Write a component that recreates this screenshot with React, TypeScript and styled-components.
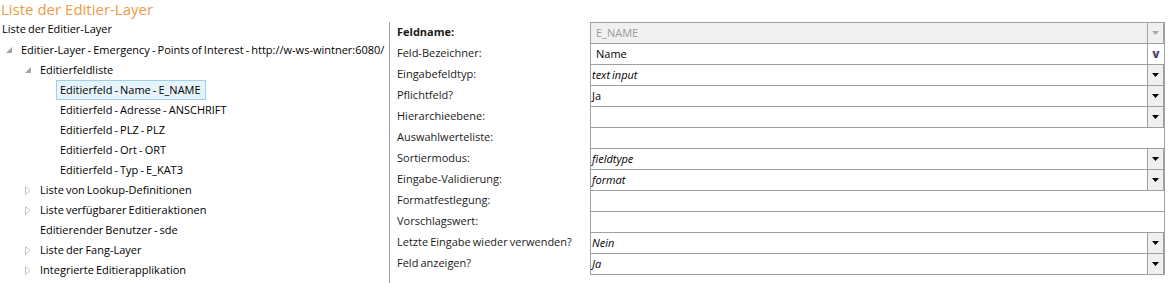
import styled, { createGlobalStyle } from "styled-components";

const GlobalStyle = createGlobalStyle`
  html, body {
    margin: 0;
    padding: 0;
    background: #fff;
  }
  body {
    font-family: "Open Sans", Lato, sans-serif;
    font-size: 11px;
    word-spacing: -0.8px;
    color: #000;
  }
`;

type Expand = "open" | "closed" | "none";

interface TreeItem {
  level: number;
  text: string;
  expand: Expand;
  selected?: boolean;
}

const treeItems: TreeItem[] = [
  { level: 0, text: "Liste der Editier-Layer", expand: "none" },
  {
    level: 1,
    text: "Editier-Layer - Emergency - Points of Interest - http://w-ws-wintner:6080/",
    expand: "open",
  },
  { level: 2, text: "Editierfeldliste", expand: "open" },
  { level: 3, text: "Editierfeld - Name - E_NAME", expand: "none", selected: true },
  { level: 3, text: "Editierfeld - Adresse - ANSCHRIFT", expand: "none" },
  { level: 3, text: "Editierfeld - PLZ - PLZ", expand: "none" },
  { level: 3, text: "Editierfeld - Ort - ORT", expand: "none" },
  { level: 3, text: "Editierfeld - Typ - E_KAT3", expand: "none" },
  { level: 2, text: "Liste von Lookup-Definitionen", expand: "closed" },
  { level: 2, text: "Liste verfügbarer Editieraktionen", expand: "closed" },
  { level: 2, text: "Editierender Benutzer - sde", expand: "none" },
  { level: 2, text: "Liste der Fang-Layer", expand: "closed" },
  { level: 2, text: "Integrierte Editierapplikation", expand: "closed" },
];

type FieldKind = "disabled" | "text" | "combo";

interface FieldDef {
  label: string;
  value: string;
  kind: FieldKind;
  bold?: boolean;
  italic?: boolean;
  dropdown?: boolean;
  spell?: boolean;
}

const fields: FieldDef[] = [
  { label: "Feldname:", value: "E_NAME", kind: "disabled", bold: true, dropdown: true },
  { label: "Feld-Bezeichner:", value: "Name", kind: "text", spell: true },
  { label: "Eingabefeldtyp:", value: "text input", kind: "combo", italic: true, dropdown: true },
  { label: "Pflichtfeld?", value: "Ja", kind: "combo", dropdown: true },
  { label: "Hierarchieebene:", value: "", kind: "combo", dropdown: true },
  { label: "Auswahlwerteliste:", value: "", kind: "combo" },
  { label: "Sortiermodus:", value: "fieldtype", kind: "combo", italic: true, dropdown: true },
  { label: "Eingabe-Validierung:", value: "format", kind: "combo", italic: true, dropdown: true },
  { label: "Formatfestlegung:", value: "", kind: "combo" },
  { label: "Vorschlagswert:", value: "", kind: "combo" },
  { label: "Letzte Eingabe wieder verwenden?", value: "Nein", kind: "combo", italic: true, dropdown: true },
  { label: "Feld anzeigen?", value: "Ja", kind: "combo", italic: true, dropdown: true },
];

const Page = styled.div`
  height: 283px;
  display: flex;
  flex-direction: column;
  overflow: hidden;
`;

const Title = styled.div`
  height: 20px;
  line-height: 18px;
  padding-left: 1px;
  font-size: 15px;
  word-spacing: 0;
  color: #ef9b48;
  white-space: nowrap;
`;

const Main = styled.div`
  flex: 1;
  display: flex;
  min-height: 0;
`;

const TreePanel = styled.div`
  width: 389px;
  flex-shrink: 0;
  display: flex;
  flex-direction: column;
  overflow: hidden;
`;

const TreeRow = styled.div<{ $level: number }>`
  height: 20px;
  display: flex;
  align-items: center;
  white-space: nowrap;
  padding-left: ${(p) => (p.$level === 0 ? 0 : (p.$level - 1) * 20 - 1)}px;
`;

const Expander = styled.span`
  width: 17px;
  height: 20px;
  flex-shrink: 0;
  display: flex;
  align-items: center;
  justify-content: center;
`;

const TreeLabel = styled.span<{ $selected?: boolean; $root?: boolean }>`
  box-sizing: border-box;
  height: 20px;
  line-height: 18px;
  padding: 0 ${(p) => (p.$root ? 0 : 4)}px 0 ${(p) => (p.$root ? 2 : 3)}px;
  border: 1px solid ${(p) => (p.$selected ? "#99d1ef" : "transparent")};
  background: ${(p) => (p.$selected ? "#e5f3fb" : "transparent")};
  ${(p) => (p.$root ? "border: none;" : "")}
`;

const DetailPanel = styled.div`
  flex: 1;
  margin-top: 2px;
  border-left: 1px solid #a0a0a0;
  padding: 0 3px 0 7px;
  min-width: 0;
`;

const Form = styled.div`
  display: grid;
  grid-template-columns: 193px 1fr;
  grid-auto-rows: 21px;
`;

const FieldLabel = styled.div<{ $bold?: boolean }>`
  line-height: 20px;
  white-space: nowrap;
  overflow: hidden;
  font-weight: ${(p) => (p.$bold ? 700 : 400)};
  color: #1a1a1a;
`;

const FieldBox = styled.div<{ $disabled?: boolean }>`
  box-sizing: border-box;
  height: 22px;
  border: 1px solid #a0a0a0;
  background: ${(p) => (p.$disabled ? "#f0f0f0" : "#fff")};
  display: flex;
  align-items: stretch;
`;

const FieldValue = styled.div<{ $kind: FieldKind; $italic?: boolean; $split?: boolean }>`
  flex: 1;
  line-height: 19px;
  padding-left: ${(p) => (p.$kind === "combo" ? 1 : 5)}px;
  font-style: ${(p) => (p.$italic ? "italic" : "normal")};
  color: ${(p) => (p.$kind === "disabled" ? "#9c9c9c" : "#000")};
  border-right: ${(p) => (p.$split ? "1px solid #a0a0a0" : "none")};
  white-space: nowrap;
  overflow: hidden;
`;

const DropButton = styled.div`
  width: 15px;
  flex-shrink: 0;
  background: #f0f0f0;
  border-left: 1px solid #a0a0a0;
  border-right: 1px solid #a0a0a0;
  display: flex;
  align-items: center;
  justify-content: center;
`;

const SpellButton = styled.div`
  width: 16px;
  flex-shrink: 0;
  background: #fff;
  display: flex;
  align-items: center;
  justify-content: center;
  font-family: Arial, "Liberation Sans", sans-serif;
  font-weight: 700;
  font-size: 12px;
  color: #1f3a8c;
  text-shadow: -1px 0 0 rgba(226, 140, 40, 0.7);
  line-height: 19px;
`;

const Arrow = ({ disabled }: { disabled?: boolean }) => (
  <svg width="7" height="4" viewBox="0 0 7 4">
    <polygon points="0,0 7,0 3.5,4" fill={disabled ? "#a8a8a8" : "#000"} />
  </svg>
);

const ExpandIcon = ({ state }: { state: Expand }) => {
  if (state === "open") {
    return (
      <svg width="6" height="6" viewBox="0 0 6 6">
        <path d="M6 0 L6 6 L0 6 Z" fill="#a3a3a3" />
      </svg>
    );
  }
  if (state === "closed") {
    return (
      <svg width="6" height="9" viewBox="0 0 6 9">
        <path d="M0.5 0.5 L5 4.5 L0.5 8.5 Z" fill="none" stroke="#c4c4c4" />
      </svg>
    );
  }
  return null;
};

const App = () => (
  <Page>
    <GlobalStyle />
    <Title>Liste der Editier-Layer</Title>
    <Main>
      <TreePanel>
        {treeItems.map((item, i) => (
          <TreeRow key={i} $level={item.level}>
            {item.level > 0 && (
              <Expander>
                <ExpandIcon state={item.expand} />
              </Expander>
            )}
            <TreeLabel $selected={item.selected} $root={item.level === 0}>
              {item.text}
            </TreeLabel>
          </TreeRow>
        ))}
      </TreePanel>
      <DetailPanel>
        <Form>
          {fields.map((f) => [
            <FieldLabel key={f.label + "-l"} $bold={f.bold}>
              {f.label}
            </FieldLabel>,
            <FieldBox key={f.label + "-f"} $disabled={f.kind === "disabled"}>
              <FieldValue $kind={f.kind} $italic={f.italic} $split={f.spell}>
                {f.value}
              </FieldValue>
              {f.dropdown && (
                <DropButton>
                  <Arrow disabled={f.kind === "disabled"} />
                </DropButton>
              )}
              {f.spell && <SpellButton>v</SpellButton>}
            </FieldBox>,
          ])}
        </Form>
      </DetailPanel>
    </Main>
  </Page>
);

export default App;
